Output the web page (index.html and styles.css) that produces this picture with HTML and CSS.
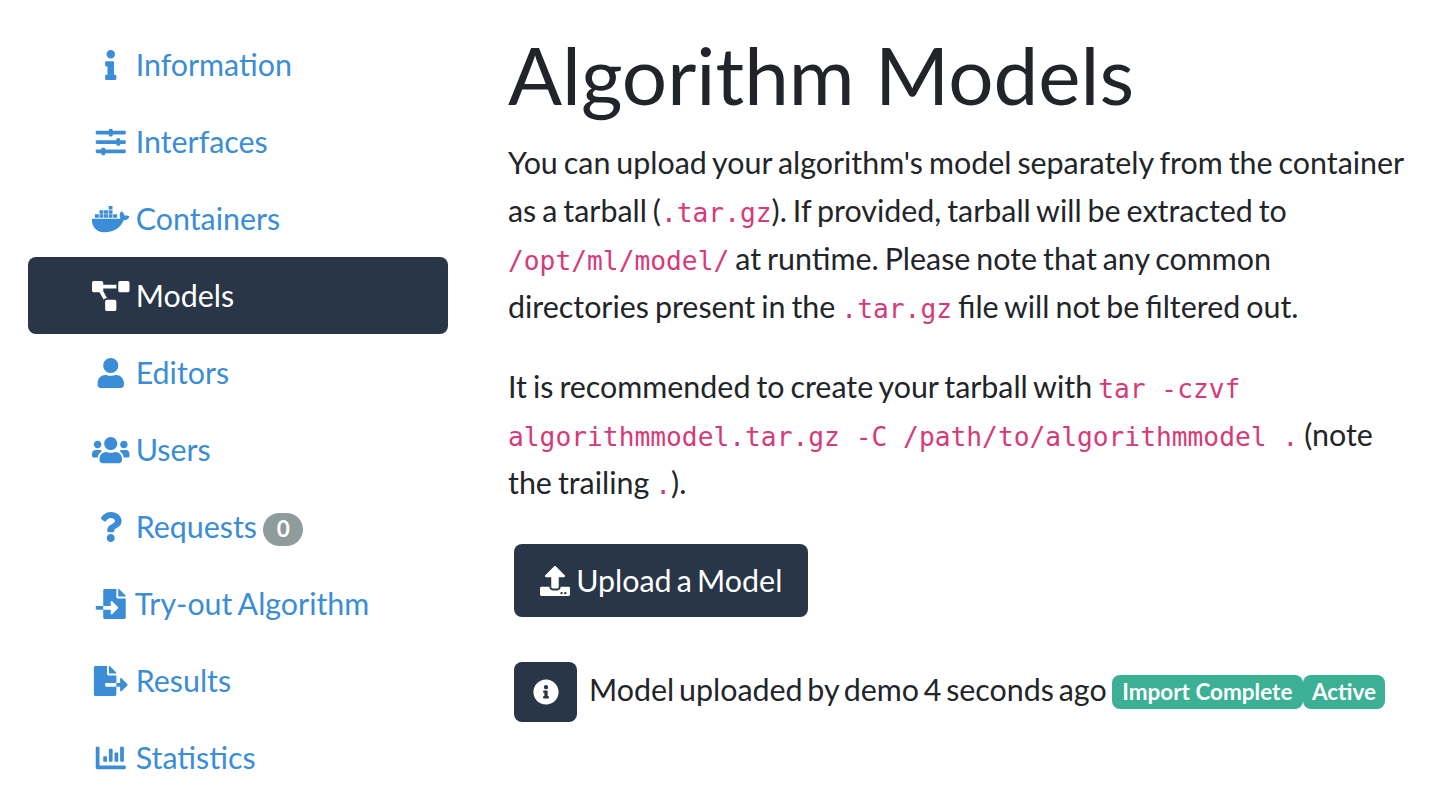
FILE: index.html
```html
<!DOCTYPE html>
<html lang="en">
<head>
  <meta charset="UTF-8" />
  <title>Algorithm Models</title>
  <link rel="stylesheet" href="styles.css">
</head>
<body>
  <div class="layout">
    <!-- Side navigation -->
    <nav class="side-nav">
      <a class="nav-link" href="#information">
        <svg class="icon" viewBox="0 0 192 512"><path d="M20 424.229h20V279.771H20c-11.046 0-20-8.954-20-20V212c0-11.046 8.954-20 20-20h112c11.046 0 20 8.954 20 20v212.229h20c11.046 0 20 8.954 20 20V492c0 11.046-8.954 20-20 20H20c-11.046 0-20-8.954-20-20v-47.771c0-11.046 8.954-20 20-20zM96 0C56.235 0 24 32.235 24 72s32.235 72 72 72 72-32.235 72-72S135.764 0 96 0z"/></svg>
        Information
      </a>
      <a class="nav-link" href="#interfaces">
        <svg class="icon" viewBox="0 0 512 512"><path d="M496 384H160v-16c0-8.8-7.2-16-16-16h-32c-8.8 0-16 7.2-16 16v16H16c-8.8 0-16 7.2-16 16v32c0 8.8 7.2 16 16 16h80v16c0 8.8 7.2 16 16 16h32c8.8 0 16-7.2 16-16v-16h336c8.8 0 16-7.2 16-16v-32c0-8.8-7.2-16-16-16zm0-160h-80v-16c0-8.8-7.2-16-16-16h-32c-8.8 0-16 7.2-16 16v16H16c-8.8 0-16 7.2-16 16v32c0 8.8 7.2 16 16 16h336v16c0 8.8 7.2 16 16 16h32c8.8 0 16-7.2 16-16v-16h80c8.8 0 16-7.2 16-16v-32c0-8.8-7.2-16-16-16zm0-160H288V48c0-8.8-7.2-16-16-16h-32c-8.8 0-16 7.2-16 16v16H16C7.2 64 0 71.2 0 80v32c0 8.8 7.2 16 16 16h208v16c0 8.8 7.2 16 16 16h32c8.8 0 16-7.2 16-16v-16h208c8.8 0 16-7.2 16-16V80c0-8.8-7.2-16-16-16z"/></svg>
        Interfaces
      </a>
      <a class="nav-link" href="#containers">
        <svg class="icon" viewBox="0 0 640 512"><path d="M349.9 236.3h-66.1v-59.4h66.1v59.4zm0-204.3h-66.1v60.7h66.1V32zm78.2 144.8H362v59.4h66.1v-59.4zm-156.3-72.1h-66.1v60.1h66.1v-60.1zm78.1 0h-66.1v60.1h66.1v-60.1zm276.8 100c-14.4-9.7-47.6-13.2-73.1-8.4-3.3-24-16.7-44.9-41.1-63.7l-14-9.3-9.3 14c-18.4 27.8-23.4 73.6-3.7 103.8-8.7 4.7-25.8 11.1-48.4 10.7H2.4c-8.7 50.8 5.8 116.8 44 162.1 37.1 43.9 92.7 66.2 165.4 66.2 157.4 0 273.9-72.5 328.4-204.2 21.4.4 67.6.1 91.3-45.2 1.5-2.5 6.6-13.2 8.5-17.1l-13.3-8.9zm-511.1-27.9h-66v59.4h66.1v-59.4zm78.1 0h-66.1v59.4h66.1v-59.4zm78.1 0h-66.1v59.4h66.1v-59.4zm-78.1-72.1h-66.1v60.1h66.1v-60.1z"/></svg>
        Containers
      </a>
      <a class="nav-link active" href="#models">
        <svg class="icon" viewBox="0 0 640 512"><path d="M384 320H256c-17.67 0-32 14.33-32 32v128c0 17.67 14.33 32 32 32h128c17.67 0 32-14.33 32-32V352c0-17.67-14.33-32-32-32zM192 32c0-17.67-14.33-32-32-32H32C14.33 0 0 14.33 0 32v128c0 17.67 14.33 32 32 32h95.72l73.16 128.04C211.98 300.98 232.4 288 256 288h.28L192 175.51V128h224V64H192V32zM608 0H480c-17.67 0-32 14.33-32 32v128c0 17.67 14.33 32 32 32h128c17.67 0 32-14.33 32-32V32c0-17.67-14.33-32-32-32z"/></svg>
        Models
      </a>
      <a class="nav-link" href="#editors">
        <svg class="icon" viewBox="0 0 448 512"><path d="M224 256c70.7 0 128-57.3 128-128S294.7 0 224 0 96 57.3 96 128s57.3 128 128 128zm89.6 32h-16.7c-22.2 10.2-46.9 16-72.9 16s-50.6-5.8-72.9-16h-16.7C60.2 288 0 348.2 0 422.4V464c0 26.5 21.5 48 48 48h352c26.5 0 48-21.5 48-48v-41.6c0-74.2-60.2-134.4-134.4-134.4z"/></svg>
        Editors
      </a>
      <a class="nav-link" href="#users">
        <svg class="icon" viewBox="0 0 640 512"><path d="M96 224c35.3 0 64-28.7 64-64s-28.7-64-64-64-64 28.7-64 64 28.7 64 64 64zm448 0c35.3 0 64-28.7 64-64s-28.7-64-64-64-64 28.7-64 64 28.7 64 64 64zm32 32h-64c-17.6 0-33.5 7.1-45.1 18.6 40.3 22.1 68.9 62 75.1 109.4h66c17.7 0 32-14.3 32-32v-32c0-35.3-28.7-64-64-64zm-256 0c61.9 0 112-50.1 112-112S381.9 32 320 32 208 82.1 208 144s50.1 112 112 112zm76.8 32h-8.3c-20.8 10-43.9 16-68.5 16s-47.6-6-68.5-16h-8.3C179.6 288 128 339.6 128 403.2V432c0 26.5 21.5 48 48 48h288c26.5 0 48-21.5 48-48v-28.8c0-63.6-51.6-115.2-115.2-115.2zm-223.7-13.4C161.5 263.1 145.6 256 128 256H64c-35.3 0-64 28.7-64 64v32c0 17.7 14.3 32 32 32h65.9c6.3-47.4 34.9-87.3 75.2-109.4z"/></svg>
        Users
      </a>
      <a class="nav-link" href="#requests">
        <svg class="icon" viewBox="0 0 384 512"><path d="M202.021 0C122.202 0 70.503 32.703 29.914 91.026c-7.363 10.58-5.093 25.086 5.178 32.874l43.138 32.709c10.373 7.865 25.132 6.026 33.253-4.148 25.049-31.381 43.63-49.449 82.757-49.449 30.764 0 68.816 19.799 68.816 49.631 0 22.552-18.617 34.134-48.993 51.164-35.423 19.86-82.299 44.576-82.299 106.405V320c0 13.255 10.745 24 24 24h72.471c13.255 0 24-10.745 24-24v-5.773c0-42.86 125.268-44.645 125.268-160.627C377.504 66.256 286.902 0 202.021 0zM192 373.459c-38.196 0-69.271 31.075-69.271 69.271 0 38.195 31.075 69.27 69.271 69.27s69.271-31.075 69.271-69.271-31.075-69.27-69.271-69.27z"/></svg>
        Requests
        <span class="badge badge-pill">0</span>
      </a>
      <a class="nav-link" href="#try-out">
        <svg class="icon" viewBox="0 0 512 512"><path d="M16 288c-8.8 0-16 7.2-16 16v32c0 8.8 7.2 16 16 16h112v-64zm489-183L407.1 7c-4.5-4.5-10.6-7-17-7H384v128h128v-6.1c0-6.3-2.5-12.4-7-16.9zm-153 31V0H152c-13.3 0-24 10.7-24 24v264h128v-65.2c0-14.3 17.3-21.4 27.4-11.3L379 308c6.6 6.7 6.6 17.4 0 24l-95.7 96.4c-10.1 10.1-27.4 3-27.4-11.3V352H128v136c0 13.3 10.7 24 24 24h336c13.3 0 24-10.7 24-24V160H376c-13.2 0-24-10.8-24-24z"/></svg>
        Try-out Algorithm
      </a>
      <a class="nav-link" href="#results">
        <svg class="icon" viewBox="0 0 576 512"><path d="M384 121.9c0-6.3-2.5-12.4-7-16.9L279.1 7c-4.5-4.5-10.6-7-17-7H256v128h128zM571 308l-95.7-96.4c-10.1-10.1-27.4-3-27.4 11.3V288h-64v64h64v65.2c0 14.3 17.3 21.4 27.4 11.3L571 332c6.6-6.6 6.6-17.4 0-24zm-379 28v-32c0-8.8 7.2-16 16-16h176V160H248c-13.2 0-24-10.8-24-24V0H24C10.7 0 0 10.7 0 24v464c0 13.3 10.7 24 24 24h336c13.3 0 24-10.7 24-24V352H208c-8.8 0-16-7.2-16-16z"/></svg>
        Results
      </a>
      <a class="nav-link" href="#statistics">
        <svg class="icon" viewBox="0 0 512 512"><path d="M332.8 320h38.4c6.4 0 12.8-6.4 12.8-12.8V172.8c0-6.4-6.4-12.8-12.8-12.8h-38.4c-6.4 0-12.8 6.4-12.8 12.8v134.4c0 6.4 6.4 12.8 12.8 12.8zm96 0h38.4c6.4 0 12.8-6.4 12.8-12.8V76.8c0-6.4-6.4-12.8-12.8-12.8h-38.4c-6.4 0-12.8 6.4-12.8 12.8v230.4c0 6.4 6.4 12.8 12.8 12.8zm-288 0h38.4c6.4 0 12.8-6.4 12.8-12.8v-70.4c0-6.4-6.4-12.8-12.8-12.8h-38.4c-6.4 0-12.8 6.4-12.8 12.8v70.4c0 6.4 6.4 12.8 12.8 12.8zm96 0h38.4c6.4 0 12.8-6.4 12.8-12.8V108.8c0-6.4-6.4-12.8-12.8-12.8h-38.4c-6.4 0-12.8 6.4-12.8 12.8v198.4c0 6.4 6.4 12.8 12.8 12.8zM496 384H64V80c0-8.84-7.16-16-16-16H16C7.16 64 0 71.16 0 80v336c0 17.67 14.33 32 32 32h464c8.84 0 16-7.16 16-16v-32c0-8.84-7.16-16-16-16z"/></svg>
        Statistics
      </a>
    </nav>

    <!-- Main content -->
    <main class="content">
      <h1>Algorithm Models</h1>
      <p>You can upload your algorithm's model separately from the container as a tarball (<code>.tar.gz</code>). If provided, tarball will be extracted to <code>/opt/ml/model/</code> at runtime. Please note that any common directories present in the <code>.tar.gz</code> file will not be filtered out.</p>
      <p>It is recommended to create your tarball with <code>tar -czvf algorithmmodel.tar.gz -C /path/to/algorithmmodel .</code> (note the trailing <code>.</code>).</p>

      <a class="btn" href="#upload">
        <svg class="btn-icon" viewBox="0 0 512 512"><path d="M296 384h-80c-13.3 0-24-10.7-24-24V192h-87.7c-17.8 0-26.7-21.5-14.1-34.1L242.3 5.7c7.5-7.5 19.8-7.5 27.3 0l152.2 152.2c12.6 12.6 3.7 34.1-14.1 34.1H320v168c0 13.3-10.7 24-24 24zm216-8v112c0 13.3-10.7 24-24 24H24c-13.3 0-24-10.7-24-24V376c0-13.3 10.7-24 24-24h136v8c0 30.9 25.1 56 56 56h80c30.9 0 56-25.1 56-56v-8h136c13.3 0 24 10.7 24 24zm-124 88c0-11-9-20-20-20s-20 9-20 20 9 20 20 20 20-9 20-20zm64 0c0-11-9-20-20-20s-20 9-20 20 9 20 20 20 20-9 20-20z"/></svg>
        Upload a Model
      </a>

      <div class="model-row">
        <span class="info-box">
          <svg class="info-icon" viewBox="0 0 512 512"><path d="M256 8C119.043 8 8 119.083 8 256c0 136.997 111.043 248 248 248s248-111.003 248-248C504 119.083 392.957 8 256 8zm0 110c23.196 0 42 18.804 42 42s-18.804 42-42 42-42-18.804-42-42 18.804-42 42-42zm56 254c0 6.627-5.373 12-12 12h-88c-6.627 0-12-5.373-12-12v-24c0-6.627 5.373-12 12-12h12v-64h-12c-6.627 0-12-5.373-12-12v-24c0-6.627 5.373-12 12-12h64c6.627 0 12 5.373 12 12v100h12c6.627 0 12 5.373 12 12v24z"/></svg>
        </span>
        <span class="model-text">Model uploaded by demo 4 seconds ago</span>
        <span class="badge badge-success">Import Complete</span><span class="badge badge-success">Active</span>
      </div>
    </main>
  </div>
</body>
</html>
```

FILE: styles.css
```css
* {
  box-sizing: border-box;
}

body {
  margin: 0;
  background: #fff;
  color: #212529;
  font-family: 'Lato', sans-serif;
  font-size: 30.4px;
  line-height: 45px;
  word-spacing: -1.6px;
}

a {
  text-decoration: none;
}

.layout {
  display: flex;
  height: 800px;
  overflow: hidden;
}

/* Side navigation */
.side-nav {
  flex: none;
  width: 420px;
  margin-left: 28px;
  margin-right: 60px;
  padding-top: 26px;
}

.nav-link {
  display: block;
  padding: 16px 0 16px 64px;
  color: #3a8dd6;
  border-radius: 8px;
  white-space: nowrap;
}

.nav-link.active {
  background: #293647;
  color: #fff;
}

.icon {
  width: 37.5px;
  height: 30px;
  fill: currentColor;
  vertical-align: -4px;
}

/* Main content */
.content {
  flex: 1;
  min-width: 0;
  padding-top: 26px;
  padding-right: 40px;
}

h1 {
  margin: 0 0 16px;
  font-size: 80px;
  font-weight: 400;
  line-height: 96px;
  word-spacing: 0;
}

p {
  margin: 0 0 32px;
  line-height: 48px;
  word-spacing: -1.8px;
}

code {
  color: #d63a78;
  font-family: 'DejaVu Sans Mono', monospace;
  font-size: 26.25px;
  line-height: 1;
  word-spacing: 0;
}

.btn {
  display: inline-block;
  margin: 6px 0 0 6px;
  padding: 14px 26px;
  background: #293647;
  color: #fff;
  border-radius: 8px;
  word-spacing: -2.6px;
}

.btn-icon {
  width: 30px;
  height: 30px;
  margin-right: 1px;
  fill: currentColor;
  vertical-align: -4px;
}

.model-row {
  display: flex;
  align-items: center;
  margin: 45px 0 0 6px;
}

.info-box {
  display: flex;
  align-items: center;
  justify-content: center;
  width: 63px;
  height: 60px;
  margin-right: 12px;
  background: #293647;
  border-radius: 8px;
}

.info-icon {
  width: 26px;
  height: 26px;
  fill: #fff;
}

.model-text {
  margin-right: 5px;
  margin-bottom: 6px;
  word-spacing: -3px;
}

.badge {
  display: inline-block;
  color: #fff;
  font-size: 22.5px;
  font-weight: 700;
  line-height: 1;
  text-align: center;
  border-radius: 8px;
}

.badge-pill {
  padding: 5px 13.5px;
  background: #8e9c9b;
  border-radius: 20px;
  vertical-align: 1px;
}

.badge-success {
  padding: 6px 10.5px;
  background: #3bb094;
  word-spacing: 0;
}

.badge-success + .badge-success {
  padding: 6px 9px;
}
```
